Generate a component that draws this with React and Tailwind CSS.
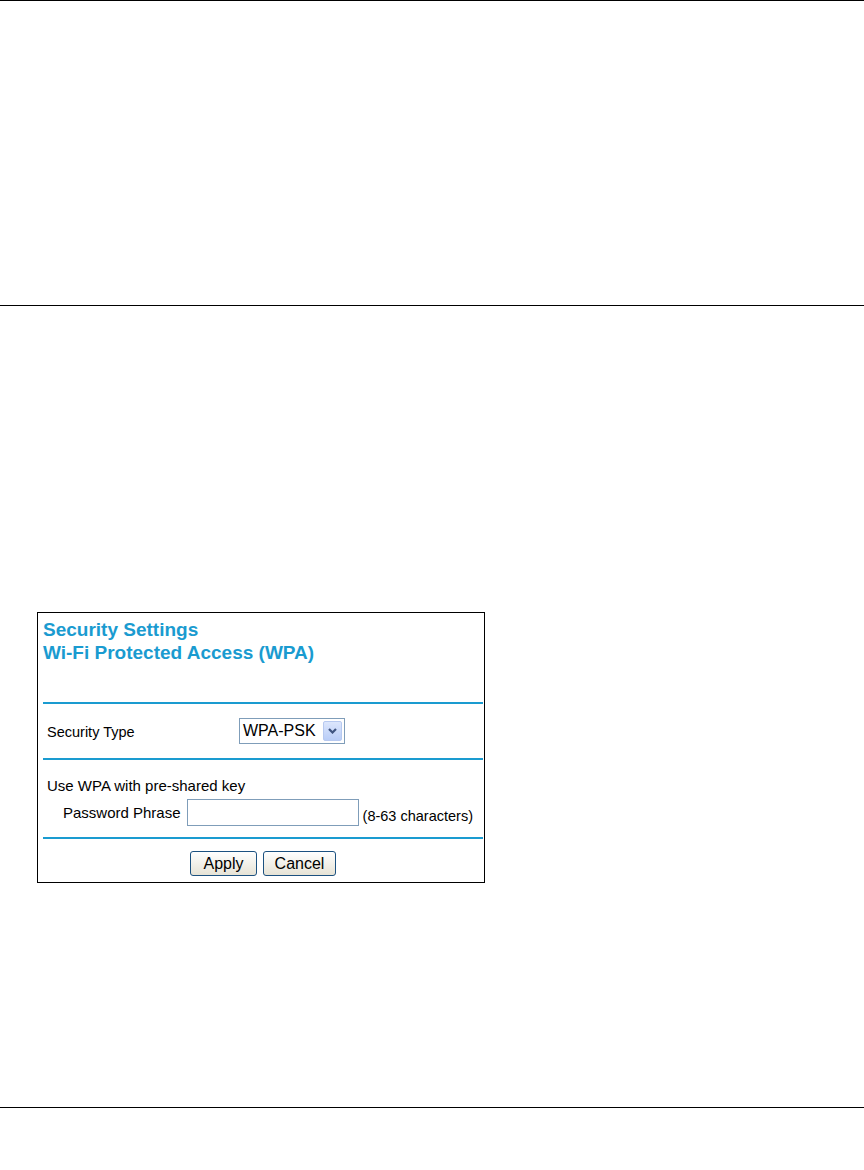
import React from "react";

const Chevron = () => (
  <svg width="9" height="6" viewBox="0 0 9 6">
    <path d="M1 1 L4.5 4.5 L8 1" fill="none" stroke="#3f5480" strokeWidth="2.2" />
  </svg>
);

const BlueRule = () => <div className="h-[2px] bg-[#1a9bd0]" />;

const XpButton = ({ children, width }) => (
  <button
    className={`h-[25px] ${width} rounded-[3px] border border-[#1c5180] bg-gradient-to-b from-white to-[#e6e3d6] text-[16px] leading-none text-black`}
  >
    {children}
  </button>
);

const SecurityPanel = () => {
  return (
    <div className="ml-[37px] w-[448px] h-[271px] border border-black bg-white">
      <div className="pl-[5px] pr-[1px]">
        <div className="pt-[5px] text-[19px] leading-[23px] font-bold text-[#1a9bd0]">
          <div>Security Settings</div>
          <div>Wi-Fi Protected Access (WPA)</div>
        </div>
        <div className="h-[38px]" />
        <BlueRule />
        <div className="h-[54px] flex items-center pl-[4px] text-[14.5px] text-black">
          <div className="w-[192px] pt-[3px]">Security Type</div>
          <div className="h-[26px] w-[106px] border border-[#7f9db9] bg-white flex items-center pl-[3px] pr-[2px]">
            <span className="flex-1 text-[16px] leading-none">WPA-PSK</span>
            <span className="h-[20px] w-[19px] rounded-[2px] border border-[#b7c9f0] bg-gradient-to-b from-[#dce6fc] to-[#b9cdf7] flex items-center justify-center">
              <Chevron />
            </span>
          </div>
        </div>
        <BlueRule />
        <div className="h-[77px] pl-[4px] pt-[17px] text-[15px] text-black">
          <div className="leading-[18px]">Use WPA with pre-shared key</div>
          <div className="mt-[3px] flex items-center pl-[16px]">
            <span>Password Phrase</span>
            <span className="ml-[6px] h-[27px] w-[172px] border border-[#7f9db9] bg-white" />
            <span className="ml-[4px] mt-[8px] text-[14.5px]">(8-63 characters)</span>
          </div>
        </div>
        <BlueRule />
        <div className="flex justify-center gap-[6px] pt-[12px]">
          <XpButton width="w-[67px]">Apply</XpButton>
          <XpButton width="w-[73px]">Cancel</XpButton>
        </div>
      </div>
    </div>
  );
};

export default function App() {
  return (
    <div
      className="w-[864px] h-[1170px] bg-white"
      style={{ fontFamily: '"Liberation Sans", Arial, sans-serif' }}
    >
      <div className="h-[306px] border-t border-b border-black" />
      <div className="h-[306px]" />
      <SecurityPanel />
      <div className="h-[224px]" />
      <div className="border-t border-black" />
    </div>
  );
}
